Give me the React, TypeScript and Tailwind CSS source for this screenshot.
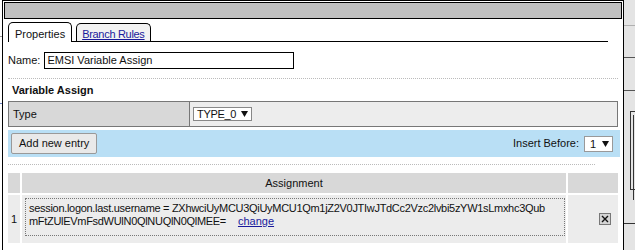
import React from 'react';

function Tri() {
  return (
    <svg width="7" height="6" viewBox="0 0 7 6" className="inline-block">
      <path d="M0 0H7L3.5 6Z" fill="#111" />
    </svg>
  );
}

function DeleteBox() {
  return (
    <div className="w-[12px] h-[12px] border border-[#777] bg-[#d4d4d4] flex items-center justify-center">
      <svg width="8" height="8" viewBox="0 0 8 8">
        <path d="M1 1L7 7M7 1L1 7" stroke="#111" strokeWidth="1.4" />
      </svg>
    </div>
  );
}

export default function App() {
  const font = "font-['Liberation_Sans',Arial,sans-serif] text-[11px] text-[#111]";
  return (
    <div className={`w-[635px] h-[250px] overflow-hidden flex bg-white ${font}`}>
      {/* page behind, left */}
      <div className="w-[2px] relative bg-white">
        <div className="absolute left-0 top-[36px] w-[2px] h-px bg-[#999]" />
        <div className="absolute left-0 top-[103px] w-[2px] h-px bg-[#6b7fc0]" />
      </div>

      {/* dialog */}
      <div className="w-[622px] h-[260px] border-x border-t border-black px-px pt-px flex flex-col bg-white">
        <div className="h-[17px] border border-black bg-[#c0c0c0]" />

        <div className="pl-[4px] pr-[2px]">
          {/* tabs */}
          <div className="mt-[3px] mr-[12px] flex items-end border-b border-black h-[20px]">
            <div className="h-[20px] -mb-px px-[6px] pt-[3px] border border-b-0 border-black rounded-t-[5px] bg-white">
              Properties
            </div>
            <div className="ml-[4px] h-[18px] px-[5px] pt-[2px] border border-b-0 border-black rounded-t-[5px] bg-[#f2f2f2]">
              <span className="text-[#1a1a9c] underline tracking-[-0.3px]">Branch Rules</span>
            </div>
          </div>

          {/* name */}
          <div className="mt-[10px] flex items-center h-[17px]">
            <span>Name:</span>
            <div className="ml-[4px] w-[250px] h-[17px] border border-black px-[2px] leading-[15px]">
              EMSI Variable Assign
            </div>
          </div>

          <div className="mt-[9px] mr-[2px] border-t border-dotted border-[#bbb]" />

          <div className="mt-[5px] pl-[4px] font-bold leading-[13px]">Variable Assign</div>

          {/* type row */}
          <div className="mt-[4px] mr-[2px] h-[26px] border border-[#777] flex">
            <div className="w-[181px] bg-[#d8d8d8] border-r border-[#777] pl-[4px] flex items-center">Type</div>
            <div className="flex-1 bg-[#ededed] flex items-center pl-[3px]">
              <div className="w-[59px] h-[14px] border border-[#888] bg-white flex items-center gap-[5px] pl-[3px] leading-none">
                <span className="tracking-[-0.3px]">TYPE_0</span>
                <Tri />
              </div>
            </div>
          </div>

          {/* add bar */}
          <div className="mt-[3px] h-[27px] bg-[#b9dff5] flex items-center justify-between pl-[3px] pr-[7px]">
            <div className="h-[21px] px-[7px] border border-[#999] rounded-[2px] bg-[#e9e9e9] flex items-center">
              Add new entry
            </div>
            <div className="flex items-center gap-[5px]">
              <span>Insert Before:</span>
              <div className="w-[29px] h-[16px] border border-[#999] bg-white flex items-center gap-[6px] pl-[5px] leading-none">
                <span className="mt-[2px]">1</span>
                <Tri />
              </div>
            </div>
          </div>

          <div className="mt-[7px] mr-[25px] border-t border-dotted border-[#bbb]" />

          {/* assignment table */}
          <div className="mt-[8px] mr-[2px] flex flex-col gap-[2px]">
            <div className="flex gap-[2px] h-[20px]">
              <div className="w-[12px] bg-[#d8d8d8]" />
              <div className="w-[544px] bg-[#d8d8d8] flex items-center justify-center">Assignment</div>
              <div className="flex-1 bg-[#d8d8d8]" />
            </div>
            <div className="flex gap-[2px] h-[48px]">
              <div className="w-[12px] bg-[#ececec] flex items-center pl-[3px]">1</div>
              <div className="w-[544px] bg-[#ececec] p-[3px] pr-[1px]">
                <div className="h-[38px] border border-dotted border-[#777] pl-[3px] pt-[3px] leading-[13px]">
                  <div className="whitespace-nowrap tracking-[-0.3px]">
                    session.logon.last.username = ZXhwciUyMCU3QiUyMCU1Qm1jZ2V0JTIwJTdCc2Vzc2lvbi5zYW1sLmxhc3Qub
                  </div>
                  <div className="whitespace-nowrap">
                    <span className="tracking-[-0.3px]">mFtZUlEVmFsdWUlN0QlNUQlN0QlMEE=</span>
                    <span className="ml-[12px] text-[#1a1a9c] underline">change</span>
                  </div>
                </div>
              </div>
              <div className="flex-1 bg-[#ececec] flex items-center justify-end pr-[7px]">
                <DeleteBox />
              </div>
            </div>
          </div>
        </div>
      </div>

      {/* page behind, right */}
      <div className="flex-1 relative bg-[#e4e4e4]">
        <div className="absolute left-0 right-0 top-[25px] h-px bg-[#b0b0b0]" />
        <div className="absolute left-0 right-0 top-[57px] h-px bg-[#555]" />
        <div className="absolute left-0 right-0 top-[90px] h-px bg-[#555]" />
        <div className="absolute left-[6px] right-0 top-[111px] h-px bg-[#333]" />
        <div className="absolute left-[6px] top-[111px] w-px h-[79px] bg-[#333]" />
        <div className="absolute left-[9px] top-[115px] w-px h-[85px] bg-[#333]" />
        <div className="absolute left-[6px] right-0 top-[189px] h-px bg-[#333]" />
        <div className="absolute left-0 right-0 top-[223px] h-px bg-[#333]" />
      </div>
    </div>
  );
}
